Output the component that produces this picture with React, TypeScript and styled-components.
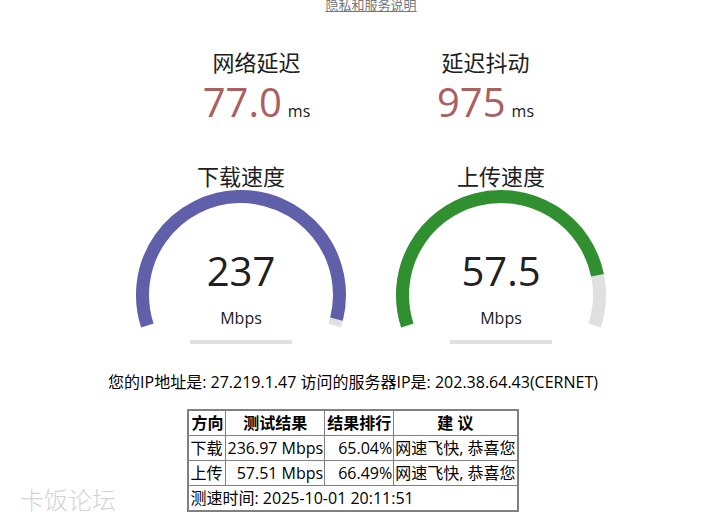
import styled, { createGlobalStyle } from "styled-components";

const GlobalStyle = createGlobalStyle`
  html, body {
    margin: 0;
    padding: 0;
    background: #fff;
  }
  body {
    font-family: "Open Sans", "Noto Sans CJK SC", sans-serif;
    color: #202020;
    overflow: hidden;
  }
`

const METER_BG = "#E0E0E0"
const START = -1.1 * Math.PI
const SPAN = 1.2 * Math.PI

const mbpsToAmount = (s: number) => 1 - 1 / Math.pow(1.3, Math.sqrt(s))

const arcPath = (cx: number, cy: number, r: number, a0: number, a1: number) => {
  const x0 = cx + r * Math.cos(a0)
  const y0 = cy + r * Math.sin(a0)
  const x1 = cx + r * Math.cos(a1)
  const y1 = cy + r * Math.sin(a1)
  const large = a1 - a0 > Math.PI ? 1 : 0
  return `M ${x0.toFixed(2)} ${y0.toFixed(2)} A ${r} ${r} 0 ${large} 1 ${x1.toFixed(2)} ${y1.toFixed(2)}`
}

type GaugeProps = { title: string; value: string; speed: number; color: string }

const Gauge = ({ title, value, speed, color }: GaugeProps) => {
  const amount = mbpsToAmount(speed)
  return (
    <GaugeCell>
      <GaugeTitle>{title}</GaugeTitle>
      <GaugeBox>
        <svg width={220} height={140} viewBox="0 0 220 140">
          <path d={arcPath(110, 106, 98.5, START, START + SPAN)} stroke={METER_BG} strokeWidth={13} fill="none" />
          <path d={arcPath(110, 106, 98.5, START, START + SPAN * amount)} stroke={color} strokeWidth={13} fill="none" />
        </svg>
        <Readout>
          <BigValue $color="#202020">{value}</BigValue>
          <GaugeUnit>Mbps</GaugeUnit>
        </Readout>
      </GaugeBox>
      <ProgressTrack />
    </GaugeCell>
  )
}

export default function App() {
  return (
    <Page>
      <GlobalStyle />
      <PrivacyLink href="#">隐私和服务说明</PrivacyLink>
      <LatencyRow>
        <LatencyCell>
          <TestName>网络延迟</TestName>
          <ValueLine>
            <BigValue $color="#AA6060">77.0</BigValue>
            <SmallUnit>ms</SmallUnit>
          </ValueLine>
        </LatencyCell>
        <LatencyCell>
          <TestName>延迟抖动</TestName>
          <ValueLine>
            <BigValue $color="#AA6060">975</BigValue>
            <SmallUnit>ms</SmallUnit>
          </ValueLine>
        </LatencyCell>
      </LatencyRow>
      <GaugeRow>
        <Gauge title="下载速度" value="237" speed={236.97} color="#6060AA" />
        <Gauge title="上传速度" value="57.5" speed={57.51} color="#309030" />
      </GaugeRow>
      <Results>
        <IpLine>您的IP地址是: 27.219.1.47 访问的服务器IP是: 202.38.64.43(CERNET)</IpLine>
        <ResultTable>
          <tbody>
            <tr>
              <Th>方向</Th>
              <Th>测试结果</Th>
              <Th>结果排行</Th>
              <Th>建&nbsp;议</Th>
            </tr>
            <tr>
              <Td>下载</Td>
              <Td $right>236.97 Mbps</Td>
              <Td $right>65.04%</Td>
              <Td>网速飞快, 恭喜您</Td>
            </tr>
            <tr>
              <Td>上传</Td>
              <Td $right>57.51 Mbps</Td>
              <Td $right>66.49%</Td>
              <Td>网速飞快, 恭喜您</Td>
            </tr>
            <tr>
              <Td colSpan={4}>测速时间: 2025-10-01 20:11:51</Td>
            </tr>
          </tbody>
        </ResultTable>
      </Results>
      <Watermark>卡饭论坛</Watermark>
    </Page>
  )
}

const Page = styled.div`
  position: relative;
  width: 728px;
  height: 524px;
  box-sizing: border-box;
  padding-left: 14px;
  display: flex;
  flex-direction: column;
  align-items: center;
`

const PrivacyLink = styled.a`
  margin-top: -2px;
  font-size: 13px;
  line-height: 15px;
  color: #777;
  text-decoration: underline;
`

const LatencyRow = styled.div`
  margin-top: 36px;
  display: flex;
`

const LatencyCell = styled.div`
  width: 229px;
  display: flex;
  flex-direction: column;
  align-items: center;
`

const TestName = styled.div`
  font-size: 22px;
  line-height: 26px;
  color: #202020;
`

const ValueLine = styled.div`
  margin-top: 5px;
  display: flex;
  align-items: baseline;
  gap: 6px;
`

const BigValue = styled.span<{ $color: string }>`
  font-size: 40px;
  line-height: 44px;
  color: ${p => p.$color};
`

const SmallUnit = styled.span`
  font-size: 16px;
  color: #202020;
`

const GaugeRow = styled.div`
  margin-top: 39px;
  display: flex;
`

const GaugeCell = styled.div`
  width: 260px;
  display: flex;
  flex-direction: column;
  align-items: center;
`

const GaugeTitle = styled(TestName)``

const GaugeBox = styled.div`
  position: relative;
  width: 220px;
  height: 140px;
  svg { display: block; }
`

const Readout = styled.div`
  position: absolute;
  left: 0;
  right: 0;
  top: 58px;
  display: flex;
  flex-direction: column;
  align-items: center;
  gap: 13px;
  ${BigValue} { line-height: 48px; }
`

const GaugeUnit = styled.span`
  font-size: 16px;
  line-height: 20px;
`

const ProgressTrack = styled.div`
  margin-top: 11px;
  width: 102px;
  height: 4px;
  background: ${METER_BG};
`

const Results = styled.div`
  margin-right: 36px;
  margin-top: 28px;
  display: flex;
  flex-direction: column;
  align-items: center;
  gap: 17px;
  font-size: 16px;
`

const IpLine = styled.div`
  line-height: 20px;
  color: #000;
`

const ResultTable = styled.table`
  border-collapse: collapse;
  border: 2px solid #808080;
  color: #000;
`

const Th = styled.th`
  border: 1px solid #808080;
  padding: 1px 2px;
  font-weight: bold;
  line-height: 22px;
  text-align: center;
`

const Td = styled.td<{ $right?: boolean }>`
  border: 1px solid #808080;
  padding: 1px 1px;
  line-height: 22px;
  text-align: ${p => (p.$right ? "right" : "left")};
  white-space: nowrap;
`

const Watermark = styled.div`
  position: absolute;
  left: 20px;
  top: 486px;
  font-size: 24px;
  line-height: 28px;
  font-weight: 300;
  color: #d4d4d4;
  pointer-events: none;
`
